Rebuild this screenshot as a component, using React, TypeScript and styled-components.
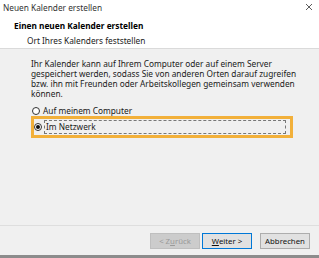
import styled, { createGlobalStyle } from 'styled-components';

const GlobalStyle = createGlobalStyle`
  html, body {
    margin: 0;
    padding: 0;
    background: #f0f0f0;
  }
  * {
    box-sizing: border-box;
  }
`;

const Window = styled.div`
  width: 319px;
  height: 258px;
  display: flex;
  flex-direction: column;
  background: #f0f0f0;
  font-family: "Noto Sans", "Liberation Sans", sans-serif;
  font-size: 8.3px;
  color: #1a1a1a;
  border-bottom: 3px solid #8c8c8c;
`;

const TitleBar = styled.div`
  height: 14px;
  display: flex;
  align-items: center;
  justify-content: space-between;
  padding: 0 7px 0 3px;
  background: #ffffff;
  color: #333;
`;

const CloseIcon = styled.svg`
  width: 6px;
  height: 6px;
`;

const Header = styled.div`
  background: #ffffff;
  border-bottom: 1px solid #dadada;
  height: 35px;
  padding: 6px 0 0 14px;
  display: flex;
  flex-direction: column;
`;

const HeaderTitle = styled.div`
  font-weight: 700;
  line-height: 12px;
  color: #000;
`;

const HeaderSub = styled.div`
  padding-left: 13px;
  margin-top: 3px;
  line-height: 12px;
  color: #222;
`;

const Body = styled.div`
  flex: 1;
  padding: 10px 0 0 31px;
  display: flex;
  flex-direction: column;
`;

const Paragraph = styled.p`
  margin: 0;
  line-height: 10px;
  white-space: nowrap;
`;

const RadioGroup = styled.div`
  margin-top: 7px;
  margin-left: 1px;
  display: flex;
  flex-direction: column;
`;

const RadioRow = styled.div<{ $focused?: boolean }>`
  display: flex;
  align-items: center;
  height: ${({ $focused }) => ($focused ? '22px' : '10px')};
  width: ${({ $focused }) => ($focused ? '262px' : 'auto')};
  margin-left: ${({ $focused }) => ($focused ? '-1px' : '0')};
  padding: ${({ $focused }) => ($focused ? '0 4px 0 0' : '0')};
  border: ${({ $focused }) => ($focused ? '3px solid #f2b03a' : 'none')};
`;

const RadioCircle = styled.span<{ $checked?: boolean }>`
  width: 8px;
  height: 8px;
  border-radius: 50%;
  border: 1px solid #333;
  background: #fff;
  display: flex;
  align-items: center;
  justify-content: center;
  flex-shrink: 0;
  &::after {
    content: '';
    width: 4px;
    height: 4px;
    border-radius: 50%;
    background: ${({ $checked }) => ($checked ? '#111' : 'transparent')};
  }
`;

const RadioLabel = styled.span<{ $focused?: boolean }>`
  margin-left: 2px;
  line-height: 12px;
  flex: ${({ $focused }) => ($focused ? 1 : 'none')};
  height: ${({ $focused }) => ($focused ? '14px' : 'auto')};
  display: flex;
  align-items: center;
  padding-left: 1px;
  border: ${({ $focused }) => ($focused ? '1px dashed #777' : 'none')};
`;

const Footer = styled.div`
  height: 30px;
  border-top: 1px solid #dedede;
  display: flex;
  justify-content: flex-end;
  align-items: flex-start;
  padding: 7px 9px 0 0;
  gap: 2px;
`;

const Button = styled.button<{ $variant?: 'disabled' | 'default' | 'normal' }>`
  width: 50px;
  height: 16px;
  padding: 0;
  font-family: inherit;
  font-size: 7.8px;
  background: ${({ $variant }) => ($variant === 'disabled' ? '#cccccc' : '#e1e1e1')};
  color: ${({ $variant }) => ($variant === 'disabled' ? '#9a9a9a' : '#111')};
  border: 1px solid
    ${({ $variant }) =>
      $variant === 'default' ? '#0078d7' : $variant === 'disabled' ? '#bfbfbf' : '#adadad'};
  &:last-child {
    margin-left: 6px;
  }
`;

const App = () => (
  <>
    <GlobalStyle />
    <Window>
      <TitleBar>
        <span>Neuen Kalender erstellen</span>
        <CloseIcon viewBox="0 0 6 6">
          <path d="M0 0L6 6M6 0L0 6" stroke="#333" strokeWidth="0.8" />
        </CloseIcon>
      </TitleBar>
      <Header>
        <HeaderTitle>Einen neuen Kalender erstellen</HeaderTitle>
        <HeaderSub>Ort Ihres Kalenders feststellen</HeaderSub>
      </Header>
      <Body>
        <Paragraph>
          Ihr Kalender kann auf Ihrem Computer oder auf einem Server
          <br />
          gespeichert werden, sodass Sie von anderen Orten darauf zugreifen
          <br />
          bzw. ihn mit Freunden oder Arbeitskollegen gemeinsam verwenden
          <br />
          können.
        </Paragraph>
        <RadioGroup>
          <RadioRow>
            <RadioCircle />
            <RadioLabel>Auf meinem Computer</RadioLabel>
          </RadioRow>
          <RadioRow $focused>
            <RadioCircle $checked />
            <RadioLabel $focused>Im Netzwerk</RadioLabel>
          </RadioRow>
        </RadioGroup>
      </Body>
      <Footer>
        <Button $variant="disabled">
          &lt; Z<u>u</u>rück
        </Button>
        <Button $variant="default">
          <u>W</u>eiter &gt;
        </Button>
        <Button $variant="normal">Abbrechen</Button>
      </Footer>
    </Window>
  </>
);

export default App;
